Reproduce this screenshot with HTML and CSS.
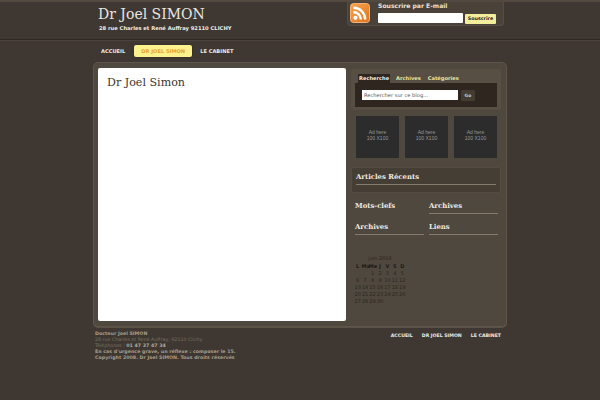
FILE: index.html
```html
<!DOCTYPE html>
<html lang="fr">
<head>
<meta charset="utf-8">
<title>Dr Joel SIMON</title>
<link rel="stylesheet" href="styles.css">
</head>
<body>
<header class="top">
  <div class="wrap top-in">
    <div class="brand">
      <h1>Dr Joel SIMON</h1>
      <p>28 rue Charles et René Auffray 92110 CLICHY</p>
    </div>
    <div class="subscribe">
      <svg class="rss" viewBox="0 0 20 20" width="20" height="20">
        <defs>
          <linearGradient id="rssfill" x1="0" y1="0" x2="1" y2="1">
            <stop offset="0" stop-color="#f6a552"/>
            <stop offset="1" stop-color="#de7420"/>
          </linearGradient>
        </defs>
        <rect x="0.5" y="0.5" width="19" height="19" rx="3" fill="url(#rssfill)" stroke="#f3b27a"/>
        <circle cx="5.5" cy="14.8" r="2.1" fill="#fff"/>
        <path d="M3.5 9.2a7.2 7.2 0 0 1 7.3 7.3M3.5 4.8a11.7 11.7 0 0 1 11.7 11.7" fill="none" stroke="#fff" stroke-width="2.4"/>
      </svg>
      <div class="sub-form">
        <div class="sub-label">Souscrire par E-mail</div>
        <div class="sub-row">
          <span class="sub-input"></span>
          <span class="sub-btn">Souscrire</span>
        </div>
      </div>
    </div>
  </div>
</header>
<nav class="wrap nav">
  <a>ACCUEIL</a>
  <a class="on">DR JOEL SIMON</a>
  <a>LE CABINET</a>
</nav>
<main class="wrap panel">
  <section class="content"><h2>Dr Joel Simon</h2></section>
  <aside class="side">
    <div class="tabs-box">
      <div class="tabs">
        <span class="tab active">Recherche</span>
        <span class="tab">Archives</span>
        <span class="tab">Catégories</span>
      </div>
      <div class="search">
        <span class="search-input">Rechercher sur ce blog...</span>
        <span class="go">Go</span>
      </div>
    </div>
    <div class="ads">
      <div class="ad">Ad here<br>100 X100</div>
      <div class="ad">Ad here<br>100 X100</div>
      <div class="ad">Ad here<br>100 X100</div>
    </div>
    <div class="recent"><h3>Articles Récents</h3></div>
    <div class="cols">
      <h3 class="plain">Mots-clefs</h3>
      <h3>Archives</h3>
      <h3>Archives</h3>
      <h3>Liens</h3>
    </div>
    <table class="cal">
      <caption>juin 2016</caption>
      <tr><th>L</th><th>Ma</th><th>Me</th><th>J</th><th>V</th><th>S</th><th>D</th></tr>
      <tr><td></td><td></td><td>1</td><td>2</td><td>3</td><td>4</td><td>5</td></tr>
      <tr><td>6</td><td>7</td><td>8</td><td>9</td><td>10</td><td>11</td><td>12</td></tr>
      <tr><td>13</td><td>14</td><td>15</td><td>16</td><td>17</td><td>18</td><td>19</td></tr>
      <tr><td>20</td><td>21</td><td>22</td><td>23</td><td>24</td><td>25</td><td>26</td></tr>
      <tr><td>27</td><td>28</td><td>29</td><td>30</td><td></td><td></td><td></td></tr>
    </table>
  </aside>
</main>
<footer class="wrap foot">
  <div class="foot-text">
    <strong>Docteur Joel SIMON</strong>
    <span>28 rue Charles et René Auffray, 92110 Clichy</span>
    <span>Téléphones : <b>01 47 37 47 34</b></span>
    <strong>En cas d'urgence grave, un réflexe : composer le 15.</strong>
    <strong>Copyright 2008. Dr Joel SIMON. Tous droits réservés</strong>
  </div>
  <div class="foot-nav"><a>ACCUEIL</a><a>DR JOEL SIMON</a><a>LE CABINET</a></div>
</footer>
</body>
</html>
```
FILE: styles.css
```css
* { box-sizing: border-box; }
html, body { margin: 0; padding: 0; }
body { width: 600px; height: 400px; overflow: hidden; background: #3f3832; font-family: "DejaVu Sans", sans-serif; }
.wrap { width: 414px; margin: 0 auto; }
.top { height: 40px; border-top: 2px solid #54493f; border-bottom: 1px solid #2f2925; box-shadow: 0 1px 0 #4c443c; }
.top-in { display: flex; justify-content: space-between; height: 37px; }
.brand { padding: 3px 0 0 5px; }
.brand h1 { margin: 0; font: normal 14px/19px "DejaVu Serif", serif; color: #e9e6e0; }
.brand p { margin: -1px 0 0 1px; font: bold 5.2px/10px "DejaVu Sans", sans-serif; color: #f0eee8; }
.subscribe { width: 157px; height: 24px; margin-right: 3px; display: flex; gap: 8px; padding: 1px 0 0 2px; background: #4a4238; border: 1px solid #554d43; border-top: 0; border-radius: 0 0 4px 4px; }
.rss { flex: none; }
.sub-form { flex: 1; margin-top: -1px; }
.sub-label { font: bold 6.1px/7px "DejaVu Sans", sans-serif; color: #e6e3da; }
.sub-row { display: flex; gap: 2px; margin-top: 4px; }
.sub-input { width: 85px; height: 10px; background: #fff; border-radius: 1px; }
.sub-btn { width: 31px; height: 10px; margin-top: 1px; background: #f2ee9c; color: #2b2620; font: bold 4.8px/10px "DejaVu Sans", sans-serif; text-align: center; border-radius: 1px; }
.nav { display: flex; align-items: center; gap: 8px; height: 22px; padding-left: 8px; }
.nav a { font: bold 5.1px/12px "DejaVu Sans", sans-serif; color: #eeebe4; }
.nav a.on { background: #fdf28c; color: #e8a52a; width: 58px; margin-left: 1px; text-align: center; height: 12px; border-radius: 2px; box-shadow: 0 0 2px #2a2520; }
.panel { height: 265px; display: flex; padding: 5px 4px; gap: 5px; background: #4f483e; border: 1px solid #5e564b; border-radius: 5px; box-shadow: 0 1px 0 #5a5247; }
.content { width: 248px; height: 253px; background: #fff; border-radius: 2px; padding: 6px 9px; }
.content h2 { margin: 0; font: normal 11.1px/17px "DejaVu Serif", serif; color: #3a3530; }
.side { width: 150px; padding-top: 1px; }
.tabs-box { height: 41px; background: #574f44; border-radius: 2px; padding: 5px 4px 0; margin-bottom: 6px; }
.tabs { display: flex; height: 9px; padding-left: 3px; }
.tab { font: bold 5.1px/9px "DejaVu Sans", sans-serif; color: #ebe59e; padding: 0 3px; margin-right: 1px; }
.tab.active { background: #2f271f; color: #f4f1ea; padding: 0 1px; margin-right: 3px; }
.search { height: 24px; background: #2f271f; display: flex; align-items: center; gap: 3px; padding-left: 7px; }
.search-input { width: 96px; height: 10px; background: #fff; color: #555; font: 5.15px/10px "DejaVu Sans", sans-serif; padding-left: 2px; }
.go { width: 14px; height: 11px; background: #443c33; color: #cfcbc0; font: bold 4.5px/11px "DejaVu Sans", sans-serif; text-align: center; border-radius: 1px; }
.ads { display: flex; gap: 6px; padding-left: 5px; }
.ad { width: 43px; height: 42px; background: #2c2c2c; color: #969696; font: 5px/6px "Liberation Sans", sans-serif; text-align: center; padding-top: 13px; }
.recent { height: 26px; margin-top: 9px; padding: 2px 4px 0; background: #453e35; border: 1px solid #544c42; border-radius: 2px; }
.recent h3, .cols h3 { margin: 0; height: 15px; font: bold 6.9px/14px "DejaVu Serif", serif; color: #eeeae2; border-bottom: 1px solid #857c6e; }
.cols { display: grid; grid-template-columns: 69px 69px; column-gap: 5px; row-gap: 6px; padding: 6px 0 0 4px; }
.cols h3.plain { border-bottom-color: transparent; }
.cal { border-collapse: collapse; table-layout: fixed; width: 52px; margin: 20px 0 0 3px; color: #2a2620; font: 5px/7px "DejaVu Sans", sans-serif; }
.cal caption { font: 5px/7px "DejaVu Sans", sans-serif; color: #2a2620; padding-bottom: 1px; }
.cal th { font-weight: bold; color: #1e1a16; }
.cal th, .cal td { padding: 0; text-align: center; }
.foot { display: flex; justify-content: space-between; padding: 4px 6px 0 2px; }
.foot-text { font: 4.75px/6px "DejaVu Sans", sans-serif; color: #79705f; display: flex; flex-direction: column; }
.foot-text strong { color: #a59c8a; }
.foot-text b { color: #b0a896; }
.foot-nav { display: flex; gap: 9px; margin-top: 1px; font: bold 4.65px/8px "DejaVu Sans", sans-serif; color: #eeebe4; }
```
